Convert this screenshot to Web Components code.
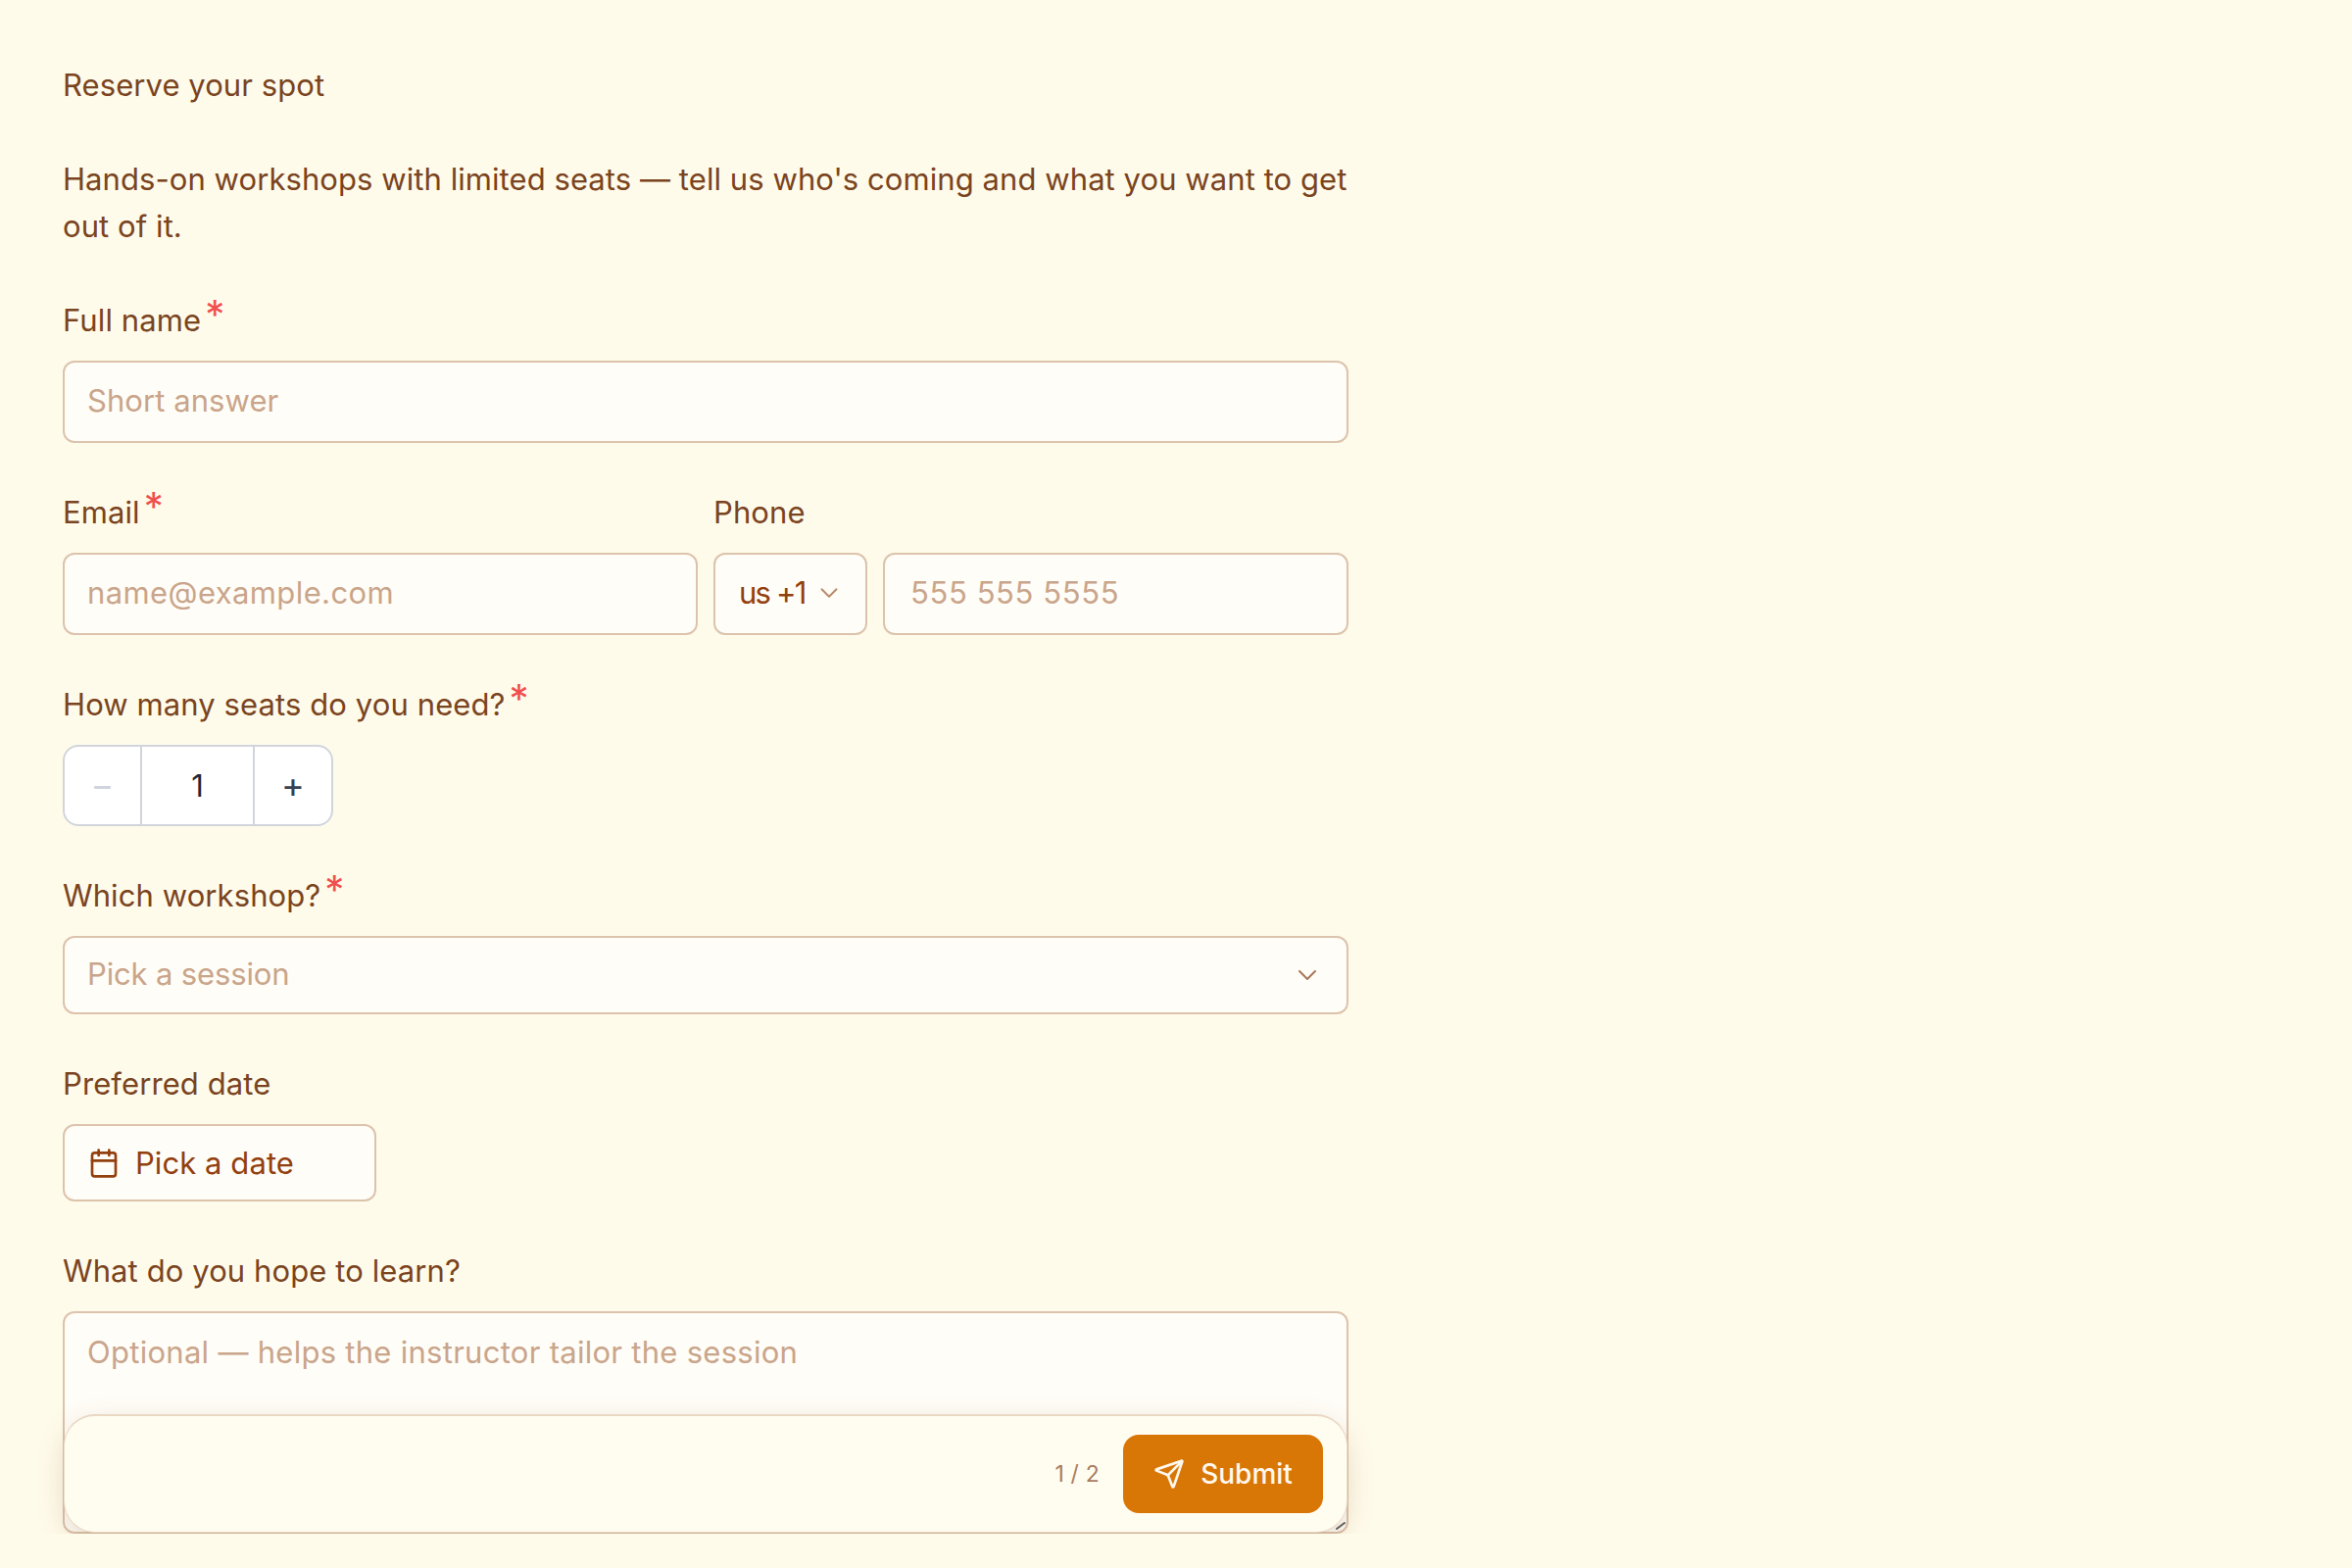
<!DOCTYPE html>
<html lang="en">
<head>
<meta charset="utf-8">
<title>Reserve your spot</title>
<style>
    html, body {
        margin: 0;
        background: #fffbeb;
        font-family: Inter, "Liberation Sans", sans-serif;
        color: #7a4420;
    }
</style>
</head>
<body>
<workshop-form>
    <form-field label="Full name" required>
        <text-box placeholder="Short answer"></text-box>
    </form-field>
    <form-row>
        <form-field label="Email" required>
            <text-box placeholder="name@example.com" style="--box-track: 0.4px"></text-box>
        </form-field>
        <form-field label="Phone">
            <phone-box></phone-box>
        </form-field>
    </form-row>
    <form-field label="How many seats do you need?" required>
        <seat-stepper value="1"></seat-stepper>
    </form-field>
    <form-field label="Which workshop?" required>
        <select-box placeholder="Pick a session"></select-box>
    </form-field>
    <form-field label="Preferred date">
        <date-button>Pick a date</date-button>
    </form-field>
    <form-field label="What do you hope to learn?">
        <note-box placeholder="Optional — helps the instructor tailor the session">
            <submit-bar step="1 / 2">Submit</submit-bar>
        </note-box>
    </form-field>
</workshop-form>

<script>
const FONT = `Inter, "Liberation Sans", sans-serif`;
const TEXT_CSS = `font-family: ${FONT}; font-size: 31px; letter-spacing: 0.07px;`;
const CHEVRON = `<svg viewBox="0 0 24 24" fill="none" stroke="currentColor" stroke-width="1.5" stroke-linecap="round" stroke-linejoin="round"><path d="m6 9 6 6 6-6"/></svg>`;

function define(name, html) {
    const template = document.createElement("template");
    template.innerHTML = html;
    customElements.define(name, class extends HTMLElement {
        constructor() {
            super();
            this.attachShadow({ mode: "open" }).append(template.content.cloneNode(true));
        }
        connectedCallback() {
            // data-attr fills text from the element's attribute of that name
            this.shadowRoot.querySelectorAll("[data-attr]").forEach(el => {
                el.textContent = this.getAttribute(el.dataset.attr) || "";
            });
            const star = this.shadowRoot.querySelector(".star");
            if (star) star.hidden = !this.hasAttribute("required");
        }
    });
}

define("workshop-form", `
    <style>
        :host {
            display: block;
            box-sizing: border-box;
            width: 1440px;
            padding: 64px 64px 0;
        }
        .stack { display: flex; flex-direction: column; gap: 48px; }
        p { margin: -1px 0 1px; ${TEXT_CSS} line-height: 48px; color: #7a4420; }
    </style>
    <div class="stack">
        <p>Reserve your spot</p>
        <p>Hands-on workshops with limited seats — tell us who's coming and what you want to get out of it.</p>
        <slot></slot>
    </div>
`);

define("form-row", `
    <style>
        :host {
            display: grid;
            grid-template-columns: 1fr 1fr;
            gap: 16px;
        }
    </style>
    <slot></slot>
`);

define("form-field", `
    <style>
        :host { display: block; }
        label {
            display: block;
            height: 48px;
            margin-bottom: 16px;
            ${TEXT_CSS}
            letter-spacing: 0.1px;
            line-height: 46px;
            color: #7a4420;
            white-space: nowrap;
        }
        .star {
            position: relative;
            top: -3px;
            margin-left: 4px;
            color: #ef4f4f;
            font-size: 40px;
            line-height: 0;
        }
    </style>
    <label><span data-attr="label"></span><span class="star">*</span></label>
    <slot></slot>
`);

define("text-box", `
    <style>
        :host {
            display: flex;
            align-items: center;
            box-sizing: border-box;
            height: 84px;
            padding: 0 var(--box-pad, 23px) 3px;
            background: #fffdf7;
            border: 2px solid #dcc3ac;
            border-radius: 12px;
            ${TEXT_CSS}
            letter-spacing: var(--box-track, 0.07px);
            color: #c9a58b;
        }
    </style>
    <span data-attr="placeholder"></span>
`);

define("phone-box", `
    <style>
        :host { display: flex; gap: 16px; }
        .code {
            display: flex;
            align-items: center;
            justify-content: space-between;
            box-sizing: border-box;
            flex: 0 0 157px;
            height: 84px;
            padding: 0 22px 3px 24px;
            background: #fffdf7;
            border: 2px solid #dcc3ac;
            border-radius: 12px;
            ${TEXT_CSS}
            letter-spacing: -1.8px;
            color: #92400e;
        }
        svg { width: 30px; height: 30px; color: #b98a68; }
        text-box { flex: 1; --box-pad: 26px; --box-track: 0.6px; }
    </style>
    <div class="code"><span>us +1</span>${CHEVRON}</div>
    <text-box placeholder="555 555 5555"></text-box>
`);

define("seat-stepper", `
    <style>
        :host {
            display: flex;
            box-sizing: border-box;
            width: 276px;
            height: 83px;
            background: #fff;
            border: 2px solid #d1d5db;
            border-radius: 16px;
            ${TEXT_CSS}
            color: #1f2937;
        }
        div { display: flex; align-items: center; justify-content: center; }
        .minus { width: 77px; padding-bottom: 2px; color: #d1d5db; font-size: 36px; }
        .value { width: 113px; border: solid #d1d5db; border-width: 0 2px; }
        .plus { flex: 1; padding-bottom: 2px; color: #374151; font-size: 36px; }
    </style>
    <div class="minus">−</div>
    <div class="value" data-attr="value"></div>
    <div class="plus">+</div>
`);

define("select-box", `
    <style>
        :host {
            display: flex;
            align-items: center;
            justify-content: space-between;
            box-sizing: border-box;
            height: 80px;
            padding: 0 24px 0 23px;
            background: #fffdf7;
            border: 2px solid #dcc3ac;
            border-radius: 12px;
            ${TEXT_CSS}
            letter-spacing: -0.15px;
            color: #c9a58b;
        }
        span { padding-bottom: 3px; }
        svg { width: 32px; height: 32px; color: #a8785a; }
    </style>
    <span data-attr="placeholder"></span>${CHEVRON}
`);

define("date-button", `
    <style>
        :host {
            display: flex;
            align-items: center;
            gap: 16px;
            box-sizing: border-box;
            width: 320px;
            height: 79px;
            padding: 0 24px;
            background: #fffdf7;
            border: 2px solid #dcc3ac;
            border-radius: 12px;
            ${TEXT_CSS}
            color: #92400e;
        }
        svg { width: 32px; height: 32px; flex: none; }
    </style>
    <svg viewBox="0 0 24 24" fill="none" stroke="currentColor" stroke-width="2" stroke-linecap="round" stroke-linejoin="round">
        <path d="M8 2v4"/><path d="M16 2v4"/><rect x="3" y="4" width="18" height="18" rx="2"/><path d="M3 10h18"/>
    </svg>
    <slot></slot>
`);

define("note-box", `
    <style>
        :host {
            display: block;
            position: relative;
            box-sizing: border-box;
            height: 227px;
            padding: 16px 23px;
            background: #fffdf7;
            border: 2px solid #dcc3ac;
            border-radius: 12px;
            ${TEXT_CSS}
            letter-spacing: 0.28px;
            line-height: 48px;
            color: #c9a58b;
        }
    </style>
    <span data-attr="placeholder"></span>
    <slot></slot>
`);

define("submit-bar", `
    <style>
        :host {
            position: absolute;
            left: -1px;
            right: -1px;
            bottom: -1px;
            display: flex;
            align-items: center;
            justify-content: flex-end;
            gap: 24px;
            box-sizing: border-box;
            height: 121px;
            padding: 0 24px;
            background: #fffcf0;
            border: 1px solid #ecdcc9;
            border-top: 2px solid #ead8c4;
            border-bottom-color: #e8d7c3;
            border-radius: 32px;
            box-shadow: 0 10px 30px -2px rgba(120, 70, 20, 0.2);
            letter-spacing: 0;
        }
        .step { font-size: 23px; letter-spacing: 0.2px; color: #a97c5f; }
        button {
            display: flex;
            align-items: center;
            justify-content: center;
            gap: 16px;
            width: 204px;
            height: 80px;
            padding: 0;
            border: 0;
            border-radius: 16px;
            background: #d97706;
            color: #fff8ee;
            font: 500 28px ${FONT};
        }
        svg { width: 32px; height: 32px; flex: none; }
        .grip { position: absolute; right: 1px; bottom: 2px; width: 10px; height: 8px; }
    </style>
    <span class="step" data-attr="step"></span>
    <button type="button">
        <svg viewBox="0 0 24 24" fill="none" stroke="currentColor" stroke-width="2" stroke-linecap="round" stroke-linejoin="round">
            <path d="M14.536 21.686a.5.5 0 0 0 .937-.024l6.5-19a.496.496 0 0 0-.635-.635l-19 6.5a.5.5 0 0 0-.024.937l7.93 3.18a2 2 0 0 1 1.112 1.11z"/>
            <path d="m21.854 2.147-10.94 10.939"/>
        </svg>
        <slot></slot>
    </button>
    <svg class="grip" viewBox="0 0 10 8" fill="none" stroke="#5f5f5f" stroke-width="2" stroke-linecap="round"><path d="M1 7 9 1"/></svg>
`);
</script>
</body>
</html>
